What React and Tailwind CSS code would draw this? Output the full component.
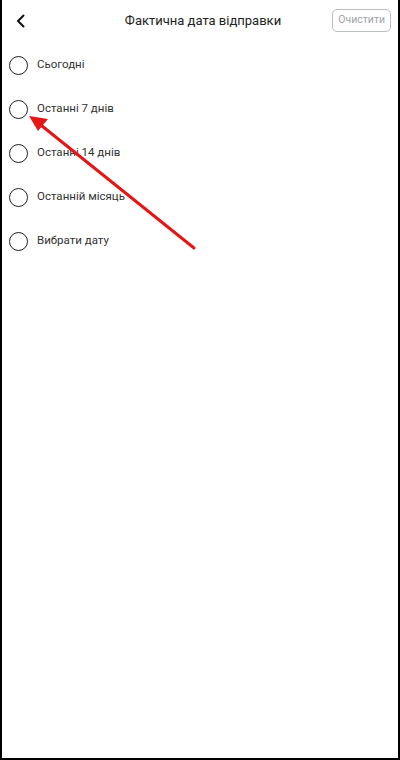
import React from "react";

const items = ["Сьогодні", "Останні 7 днів", "Останні 14 днів", "Останній місяць", "Вибрати дату"];

export default function App() {
  return (
    <div className="relative w-[400px] h-[760px] bg-white border-x-2 border-b-2 border-black overflow-hidden" style={{ fontFamily: "Roboto, 'Noto Sans', sans-serif" }}>
      <div className="relative flex items-center h-[41px]">
        <button className="ml-[12px] w-[14px] h-[20px] flex items-center justify-center">
          <svg width="10" height="14" viewBox="0 0 10 14" fill="none">
            <path d="M7.5 1.5 L2 7 L7.5 12.5" stroke="#111" strokeWidth="2" strokeLinecap="round" strokeLinejoin="round" />
          </svg>
        </button>
        <div className="absolute left-0 right-0 pl-[6px] text-center text-[13px] text-[#222] pointer-events-none">Фактична дата відправки</div>
        <button className="ml-auto mr-[7px] h-[23px] px-[5px] rounded-[5px] border border-[#b9bdc6] text-[10.5px] text-[#a0a3a8] leading-none">Очистити</button>
      </div>
      <div className="flex flex-col pt-[2px]">
        {items.map((t) => (
          <div key={t} className="flex items-center h-[44px] pl-[7px] gap-[9px]">
            <div className="w-[19px] h-[19px] rounded-full border-[1.5px] border-[#222]" />
            <span className="text-[11.5px] text-[#333]">{t}</span>
          </div>
        ))}
      </div>
      <svg className="absolute left-0 top-0 pointer-events-none" width="400" height="760">
        <line x1="192" y1="248" x2="40" y2="126" stroke="#e51616" strokeWidth="3" strokeLinecap="round" />
        <polygon points="27,116 46,119 36,131" fill="#e51616" />
      </svg>
    </div>
  );
}
